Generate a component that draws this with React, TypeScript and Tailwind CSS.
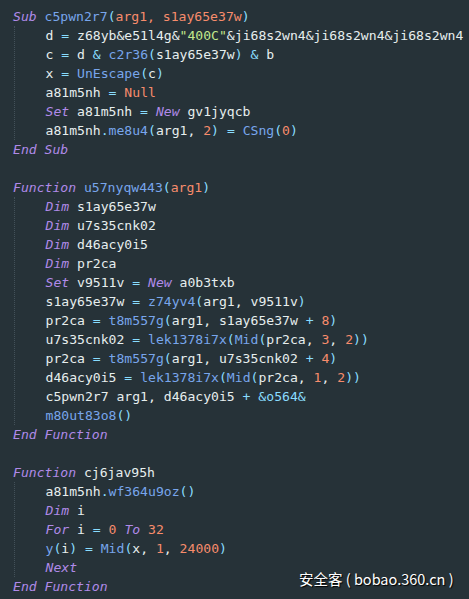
import React from "react";

const K = "text-[#b08ae8] italic";
const F = "text-[#78a6ec]";
const O = "text-[#f78c6c]";
const C = "text-[#89ddff]";
const W = "text-[#e6eeee]";
const S = "text-[#c3e88d]";

type Tok = [string, string];

function Line({ toks }: { toks: Tok[] }) {
  return (
    <div className="h-[19px] leading-[19px] whitespace-pre">
      {toks.map((t, i) => (
        <span key={i} className={t[0]}>
          {t[1]}
        </span>
      ))}
    </div>
  );
}

function Block({ lines }: { lines: Tok[][] }) {
  return (
    <div className="ml-[1px] border-l border-dotted border-[#435159] pl-[30.5px]">
      {lines.map((l, i) => (
        <Line key={i} toks={l} />
      ))}
    </div>
  );
}

export default function App() {
  const sub1: Tok[][] = [
    [[W, "d "], [C, "="], [W, " z68yb&e51l4g&"], [S, '"400C"'], [W, "&ji68s2wn4&ji68s2wn4&ji68s2wn4"]],
    [[W, "c "], [C, "="], [W, " d "], [C, "&"], [W, " "], [F, "c2r36"], [C, "("], [W, "s1ay65e37w"], [C, ")"], [W, " "], [C, "&"], [W, " b"]],
    [[W, "x "], [C, "="], [W, " "], [F, "UnEscape"], [C, "("], [W, "c"], [C, ")"]],
    [[W, "a81m5nh "], [C, "="], [W, " "], [O, "Null"]],
    [[K, "Set"], [W, " a81m5nh "], [C, "="], [W, " "], [K, "New"], [W, " gv1jyqcb"]],
    [[W, "a81m5nh"], [C, "."], [F, "me8u4"], [C, "("], [W, "arg1, "], [O, "2"], [C, ")"], [W, " "], [C, "="], [W, " "], [F, "CSng"], [C, "("], [O, "0"], [C, ")"]],
  ];
  const fn1: Tok[][] = [
    [[K, "Dim"], [W, " s1ay65e37w"]],
    [[K, "Dim"], [W, " u7s35cnk02"]],
    [[K, "Dim"], [W, " d46acy0i5"]],
    [[K, "Dim"], [W, " pr2ca"]],
    [[K, "Set"], [W, " v9511v "], [C, "="], [W, " "], [K, "New"], [W, " a0b3txb"]],
    [[W, "s1ay65e37w "], [C, "="], [W, " "], [F, "z74yv4"], [C, "("], [W, "arg1, v9511v"], [C, ")"]],
    [[W, "pr2ca "], [C, "="], [W, " "], [F, "t8m557g"], [C, "("], [W, "arg1, s1ay65e37w "], [C, "+"], [W, " "], [O, "8"], [C, ")"]],
    [[W, "u7s35cnk02 "], [C, "="], [W, " "], [F, "lek1378i7x"], [C, "("], [F, "Mid"], [C, "("], [W, "pr2ca, "], [O, "3"], [W, ", "], [O, "2"], [C, "))"]],
    [[W, "pr2ca "], [C, "="], [W, " "], [F, "t8m557g"], [C, "("], [W, "arg1, u7s35cnk02 "], [C, "+"], [W, " "], [O, "4"], [C, ")"]],
    [[W, "d46acy0i5 "], [C, "="], [W, " "], [F, "lek1378i7x"], [C, "("], [F, "Mid"], [C, "("], [W, "pr2ca, "], [O, "1"], [W, ", "], [O, "2"], [C, "))"]],
    [[W, "c5pwn2r7 arg1, d46acy0i5 "], [C, "+"], [W, " "], [C, "&o564&"]],
    [[F, "m80ut83o8"], [C, "()"]],
  ];
  const fn2: Tok[][] = [
    [[W, "a81m5nh"], [C, "."], [F, "wf364u9oz"], [C, "()"]],
    [[K, "Dim"], [W, " i"]],
    [[K, "For"], [W, " i "], [C, "="], [W, " "], [O, "0"], [W, " "], [K, "To"], [W, " "], [O, "32"]],
    [[F, "y"], [C, "("], [W, "i"], [C, ")"], [W, " "], [C, "="], [W, " "], [F, "Mid"], [C, "("], [W, "x, "], [O, "1"], [W, ", "], [O, "24000"], [C, ")"]],
    [[K, "Next"]],
  ];

  return (
    <div className="relative w-[469px] h-[599px] overflow-hidden bg-[#263238]">
      <div
        className="pt-[7px] pl-[13px] text-[13.1px]"
        style={{ fontFamily: '"DejaVu Sans Mono", "Liberation Mono", monospace' }}
      >
        <Line toks={[[K, "Sub"], [W, " "], [F, "c5pwn2r7"], [C, "("], [O, "arg1, s1ay65e37w"], [C, ")"]]} />
        <Block lines={sub1} />
        <Line toks={[[K, "End Sub"]]} />
        <div className="h-[19px]" />
        <Line toks={[[K, "Function"], [W, " "], [F, "u57nyqw443"], [C, "("], [O, "arg1"], [C, ")"]]} />
        <Block lines={fn1} />
        <Line toks={[[K, "End Function"]]} />
        <div className="h-[19px]" />
        <Line toks={[[K, "Function"], [W, " cj6jav95h"]]} />
        <Block lines={fn2} />
        <Line toks={[[K, "End Function"]]} />
      </div>
      <div
        className="absolute left-[299px] top-[569px] text-[14.5px] leading-[20px] text-white whitespace-pre [text-shadow:1px_1px_1px_#000]"
        style={{ fontFamily: '"Noto Sans CJK SC", "Noto Sans", sans-serif' }}
      >
        安全客 ( bobao.360.cn )
      </div>
    </div>
  );
}
